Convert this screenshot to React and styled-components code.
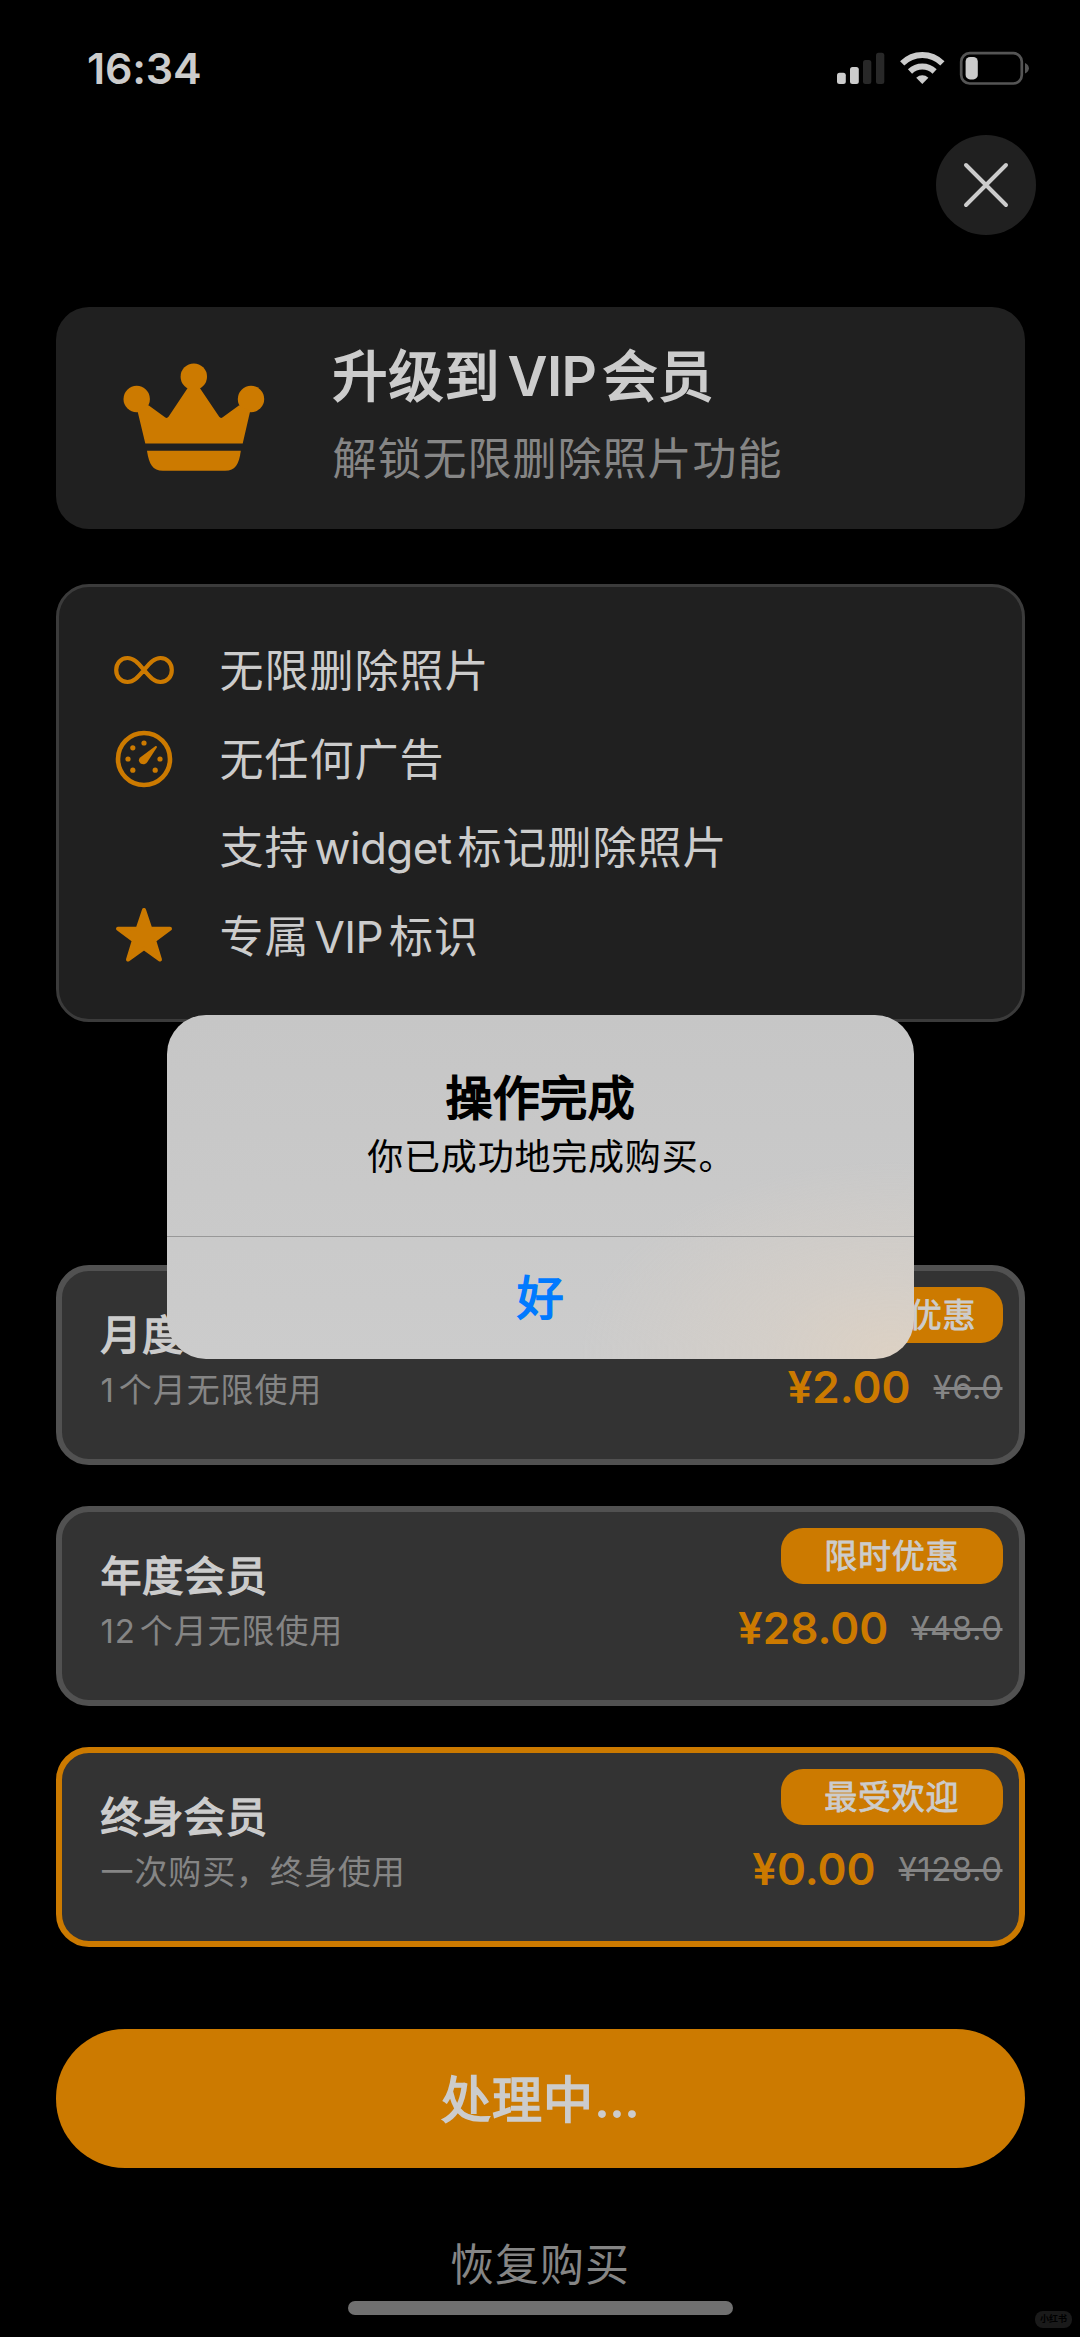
import React from 'react'
import styled, { createGlobalStyle } from 'styled-components'

const GlobalStyle = createGlobalStyle`
  * {
    box-sizing: border-box;
  }
  body {
    margin: 0;
    background: #000;
    font-family: Inter, "Noto Sans CJK SC", sans-serif;
  }
`;

const Screen = styled.div`
    position: relative;
    width: 1080px;
    height: 2337px;
    overflow: hidden;
    display: flex;
    flex-direction: column;
    background: #000;
    color: #cccccc;
`;

const StatusBar = styled.div`
    height: 135px;
    padding: 0 51px 0 87px;
    display: flex;
    align-items: flex-start;
    justify-content: space-between;
`;

const Time = styled.div`
    margin-top: 42px;
    font-size: 43px;
    line-height: 52px;
    font-weight: 600;
    letter-spacing: -0.2px;
`;

const StatusIcons = styled.svg`
    width: 192px;
    height: 34px;
    margin-top: 51px;
`;

const CloseRow = styled.div`
    display: flex;
    justify-content: flex-end;
    padding-right: 44px;
`;

const CloseButton = styled.button`
    width: 100px;
    height: 100px;
    padding: 0;
    border: 0;
    border-radius: 50%;
    background: #202020;
    display: flex;
    align-items: center;
    justify-content: center;
`;

const Content = styled.div`
    padding: 72px 55.5px 0;
    display: flex;
    flex-direction: column;
`;

const Hero = styled.div`
    height: 222px;
    border-radius: 33px;
    background: #202020;
    display: flex;
    padding: 32px 0 0 66px;
`;

const Crown = styled.svg`
    width: 144px;
    height: 110px;
    margin-top: 23px;
    fill: #cc7a00;
`;

const HeroText = styled.div`
    margin-left: 67px;
    white-space: nowrap;
`;

const HeroTitle = styled.div`
    font-size: 55px;
    line-height: 74px;
    letter-spacing: 1px;
    -webkit-text-stroke: 1.9px currentColor;
`;

const HeroSubtitle = styled.div`
    margin-top: 15px;
    font-size: 44px;
    line-height: 62px;
    letter-spacing: 1px;
    color: #868686;
`;

const Latin = styled.span`
    margin: 0 ${({ $right = 8 }) => $right}px 0 ${({ $left = 8 }) => $left}px;
    letter-spacing: ${({ $spacing = 0 }) => $spacing}px;
    font-weight: ${({ $weight = 400 }) => $weight};
    -webkit-text-stroke: 0;
`;

const Features = styled.div`
    height: 438px;
    margin-top: 55px;
    border: 3px solid #3b3b3b;
    border-radius: 33px;
    background: #202020;
    padding: 39px 0 0 54px;
`;

const FeatureRow = styled.div`
    height: 88.6px;
    display: flex;
    align-items: center;
    font-size: 44px;
    letter-spacing: 1px;
    white-space: nowrap;
`;

const FeatureText = styled.div`
    padding-bottom: 4px;
`;

const FeatureIcon = styled.svg`
    width: 62px;
    height: 62px;
    margin-right: 45px;
    fill: none;
    stroke: #cc7a00;
`;

const Plans = styled.div`
    margin-top: 243px;
    display: flex;
    flex-direction: column;
    gap: 41px;
`;

const PlanCard = styled.div`
    height: 200px;
    border: 6px solid ${({ $selected }) => ($selected ? '#cc7a00' : '#515151')};
    border-radius: 33px;
    background: #333333;
    padding: 16px 16px 0 39px;
    display: flex;
    justify-content: space-between;
    white-space: nowrap;
`;

const PlanTitle = styled.div`
    margin-top: 22px;
    font-size: 41px;
    line-height: 52px;
    letter-spacing: 0.8px;
    -webkit-text-stroke: 1.5px currentColor;
`;

const PlanNote = styled.div`
    margin-top: 5px;
    font-size: 33px;
    line-height: 48px;
    letter-spacing: 0.9px;
    color: #858585;
`;

const PlanSide = styled.div`
    display: flex;
    flex-direction: column;
    align-items: flex-end;
`;

const Badge = styled.div`
    width: 221.5px;
    height: 55.5px;
    border-radius: 22px;
    background: #cc7a00;
    font-size: 33px;
    line-height: 56px;
    letter-spacing: 0.8px;
    -webkit-text-stroke: 0.8px currentColor;
    text-align: center;
`;

const Prices = styled.div`
    margin-top: 16px;
    display: flex;
    align-items: center;
    gap: 23px;
`;

const Price = styled.div`
    font-size: 44px;
    line-height: 56px;
    font-weight: 600;
    color: #cc7a00;
`;

const OldPrice = styled.div`
    font-size: 33px;
    line-height: 56px;
    letter-spacing: 0.5px;
    color: #858585;
    text-decoration: line-through;
    text-decoration-thickness: 3px;
`;

const BuyButton = styled.button`
    height: 139px;
    margin-top: 82px;
    padding: 0 0 5px;
    border: 0;
    border-radius: 69px;
    background: #cc7a00;
    color: #cccccc;
    font-family: inherit;
    font-size: 50px;
    letter-spacing: 1px;
    -webkit-text-stroke: 1.7px currentColor;
`;

const RestoreLink = styled.div`
    margin-top: 64px;
    font-size: 44px;
    line-height: 66px;
    letter-spacing: 1px;
    text-align: center;
    color: #858585;
`;

const HomeIndicator = styled.div`
    position: absolute;
    left: 348px;
    bottom: 22px;
    width: 385px;
    height: 14px;
    border-radius: 7px;
    background: #707070;
`;

const Watermark = styled.div`
    position: absolute;
    right: 8px;
    bottom: 9px;
    width: 37px;
    height: 17px;
    border-radius: 8px;
    background: #1a1a1a;
    color: #000;
    font-size: 9px;
    line-height: 16px;
    font-weight: 700;
    text-align: center;
`;

const Alert = styled.div`
    position: absolute;
    top: 1014.5px;
    left: 166.5px;
    width: 747.5px;
    height: 344px;
    border-radius: 39px;
    overflow: hidden;
    background:
      radial-gradient(ellipse 310px 190px at 97% 98%, #dcd1c4 0%, rgba(216, 208, 199, 0.65) 40%, rgba(204, 202, 199, 0) 100%),
      linear-gradient(#c6c6c6, #cccccc);
    color: #000;
    text-align: center;
`;

const AlertBody = styled.div`
    height: 222px;
    padding-top: 52px;
    border-bottom: 1px solid #989898;
`;

const AlertTitle = styled.div`
    font-size: 47px;
    line-height: 62px;
    letter-spacing: 0.4px;
    -webkit-text-stroke: 1.9px currentColor;
`;

const AlertMessage = styled.div`
    margin-top: 2px;
    padding-left: 22px;
    font-size: 36px;
    line-height: 52px;
    letter-spacing: 0.8px;
`;

const AlertAction = styled.div`
    font-size: 47px;
    line-height: 122px;
    color: #007aff;
    -webkit-text-stroke: 1.6px currentColor;
`;

const InfinityIcon = () => (
    <FeatureIcon viewBox="0 0 62 62" strokeWidth="4.2">
        <path d="M31 31C25 24 21 19 14.500 19C7.500 19 3.200 24.500 3.200 31S7.500 43 14.500 43C21 43 25 38 31 31S41 19 47.500 19C54.500 19 58.800 24.500 58.800 31S54.500 43 47.500 43C41 43 37 38 31 31Z" />
    </FeatureIcon>
)

const GaugeIcon = () => (
    <FeatureIcon viewBox="0 0 62 62">
        <circle cx="31" cy="31" r="26" strokeWidth="4.6" />
        <g fill="#cc7a00" stroke="none">
            <circle cx="31" cy="15" r="2.6" />
            <circle cx="19.800" cy="19.800" r="2.6" />
            <circle cx="15" cy="31" r="2.6" />
            <circle cx="19.800" cy="42.200" r="2.6" />
            <circle cx="42.200" cy="42.200" r="2.6" />
            <circle cx="47" cy="31" r="2.6" />
            <path d="M42.200 18.200C43.400 17.400 44.400 18.400 43.800 19.600L34.200 34.200C30.500 39 23.500 34.500 26.800 29.800Z" />
        </g>
    </FeatureIcon>
)

const StarIcon = () => (
    <FeatureIcon viewBox="0 0 62 62" strokeWidth="4" strokeLinejoin="round">
        <path
            fill="#cc7a00"
            d="M31 5L37.200 23.500L57 23.700L41.200 35.500L47 54.500L31 43.100L15 54.500L20.800 35.500L5 23.700L24.800 23.500Z"
        />
    </FeatureIcon>
)

const features = [
    { icon: <InfinityIcon />, text: '无限删除照片' },
    { icon: <GaugeIcon />, text: '无任何广告' },
    { icon: <FeatureIcon />, text: <>支持<Latin $left={5} $right={6} $spacing={-0.6}>widget</Latin>标记删除照片</> },
    { icon: <StarIcon />, text: <>专属<Latin $left={5} $right={6} $spacing={-0.6}>VIP</Latin>标识</> },
];

const plans = [
    { title: '月度会员', note: <>1<Latin $left={0} $right={4} />个月无限使用</>, badge: '新用户优惠', price: '¥2.00', oldPrice: '¥6.0' },
    { title: '年度会员', note: <>12<Latin $left={0} $right={4} />个月无限使用</>, badge: '限时优惠', price: '¥28.00', oldPrice: '¥48.0' },
    { title: '终身会员', note: '一次购买，终身使用', badge: '最受欢迎', price: '¥0.00', oldPrice: '¥128.0', selected: true },
];

const Plan = ({ plan }) => {
    const { title, note, badge, price, oldPrice, selected } = plan;

    return (
        <PlanCard $selected={selected}>
            <div>
                <PlanTitle>{title}</PlanTitle>
                <PlanNote>{note}</PlanNote>
            </div>
            <PlanSide>
                <Badge>{badge}</Badge>
                <Prices>
                    <Price>{price}</Price>
                    <OldPrice>{oldPrice}</OldPrice>
                </Prices>
            </PlanSide>
        </PlanCard>
    )
}

const App = () => {
  return (
    <>
    <GlobalStyle />
    <Screen lang="zh-CN">
        <StatusBar>
            <Time>16:34</Time>
            <StatusIcons viewBox="0 0 192 34">
                <g fill="#cccccc">
                    <rect x="0" y="21.700" width="8.800" height="11.300" rx="2.500" />
                    <rect x="13" y="16" width="8.800" height="17" rx="2.500" />
                    <rect x="26" y="9" width="8.300" height="24" rx="2.500" fill="#282828" />
                    <rect x="39" y="1.700" width="8.300" height="31.300" rx="2.500" fill="#282828" />
                    <path d="M85.300 33L79.200 26.700C83 23.400 87.600 23.400 91.400 26.700Z" />
                </g>
                <g fill="none" stroke="#cccccc" strokeWidth="6">
                    <path d="M65.200 12.400C76.500 1.200 94.100 1.200 105.400 12.400" />
                    <path d="M73 20.500C80 13.800 90.600 13.800 97.600 20.500" />
                </g>
                <rect x="124.200" y="2.200" width="60.600" height="30.300" rx="8.500" fill="none" stroke="#555555" strokeWidth="2.700" />
                <rect x="128.600" y="6" width="12.200" height="22.400" rx="4.500" fill="#cccccc" />
                <path d="M188 12V22.500C193.200 20.500 193.200 14 188 12Z" fill="#555555" />
            </StatusIcons>
        </StatusBar>
        <CloseRow>
            <CloseButton aria-label="close">
                <svg width="48" height="48" viewBox="0 0 48 48" stroke="#cccccc" strokeWidth="4" strokeLinecap="round">
                    <path d="M4 4L44 44M44 4L4 44" />
                </svg>
            </CloseButton>
        </CloseRow>
        <Content>
            <Hero>
                <Crown viewBox="122 362 144 110">
                    <circle cx="136.700" cy="399" r="13.200" />
                    <circle cx="193.800" cy="376.700" r="13.200" />
                    <circle cx="251" cy="399" r="13.200" />
                    <path d="M137.500 411L148.500 405.300L165 417.300Q167 418.800 168.500 416.800L188 387.500H199.500L219.200 416.800Q220.700 418.800 222.700 417.300L239.200 405.300L250.200 411L242.700 443.600H145.300Z" />
                    <path d="M147 450.700H240.800C239 464 235.500 470.700 225 470.700H163C152.500 470.700 149 464 147 450.700Z" />
                </Crown>
                <HeroText>
                    <HeroTitle>升级到<Latin $weight={600} $left={7} $right={6} $spacing={-0.6}>VIP</Latin>会员</HeroTitle>
                    <HeroSubtitle>解锁无限删除照片功能</HeroSubtitle>
                </HeroText>
            </Hero>
            <Features>
                {features.map(({ icon, text }, i) => (
                    <FeatureRow key={i}>
                        {icon}
                        <FeatureText>{text}</FeatureText>
                    </FeatureRow>
                ))}
            </Features>
            <Plans>
                {plans.map((plan) => <Plan key={plan.title} plan={plan} />)}
            </Plans>
            <BuyButton>处理中<Latin $weight={600} $left={0} $right={0} $spacing={-0.9}>...</Latin></BuyButton>
            <RestoreLink>恢复购买</RestoreLink>
        </Content>
        <HomeIndicator />
        <Watermark>小红书</Watermark>
        <Alert>
            <AlertBody>
                <AlertTitle>操作完成</AlertTitle>
                <AlertMessage>你已成功地完成购买。</AlertMessage>
            </AlertBody>
            <AlertAction>好</AlertAction>
        </Alert>
    </Screen>
    </>
  )
}

export default App
